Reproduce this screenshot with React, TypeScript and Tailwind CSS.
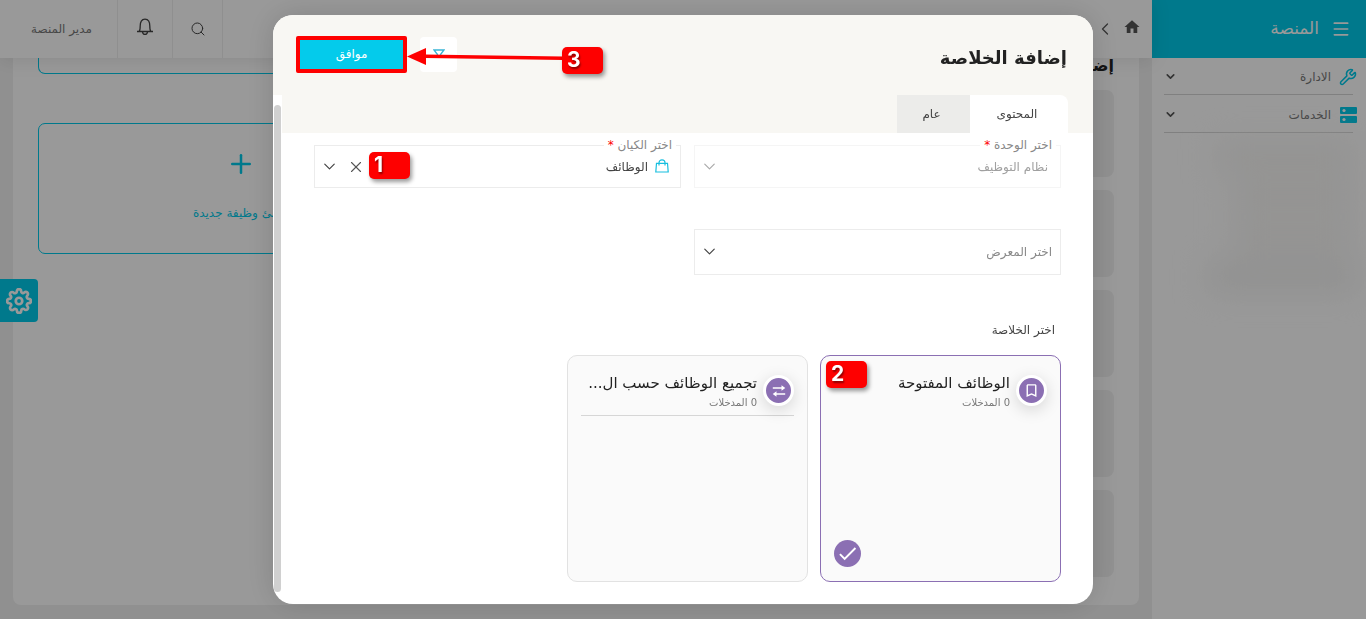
import { useState } from 'react';
import type { ReactNode } from 'react';
import { ChevronDown, ChevronLeft, Menu, Plus, Search, Wrench, X } from 'lucide-react';
import { FiSettings } from 'react-icons/fi';
import { MdBookmarkBorder, MdCheck, MdHome } from 'react-icons/md';

interface Summary {
  id: number;
  title: string;
  entries: number;
  icon: ReactNode;
  divider: boolean;
}

const ServerIcon = () => (
  <svg width="17" height="16" viewBox="0 0 17 16" fill="none">
    <rect width="17" height="7" rx="1" fill="#00cae9" />
    <rect y="9" width="17" height="7" rx="1" fill="#00cae9" />
    <circle cx="4" cy="3.5" r="1.6" fill="#fff" />
    <circle cx="4" cy="12.5" r="1.6" fill="#fff" />
  </svg>
);

const BellIcon = () => (
  <svg width="18" height="18" viewBox="0 0 18 18" fill="none" stroke="#444" strokeWidth="1.3">
    <path d="M1 13.5h16M3.2 13.3c1-1 1-2.3 1-5.3C4.2 3.8 5.5 1.2 9 1.2s4.800 2.600 4.800 6.800c0 3 0 4.300 1 5.300" />
    <path d="M6.500 13.800c.2 1.700 1.200 2.500 2.500 2.500s2.300-.8 2.500-2.500" />
  </svg>
);

const BagIcon = () => (
  <svg width="14" height="14" viewBox="0 0 14 14" fill="none" stroke="#19bfdf" strokeWidth="1.2">
    <path d="M1.500 4.300h11l.7 8.700H.8z" />
    <path d="M4 6.500V3.800C4 2 5.300.8 7 .8s3 1.200 3 3v2.700" />
  </svg>
);

const SwapIcon = () => (
  <svg width="14" height="12" viewBox="0 0 14 12" fill="#fff">
    <path d="M.8 2.200H9.500V.2L13.300 3 9.500 5.800V3.800H.8z" />
    <path d="M13.200 8.200H4.500V6.200L.7 9l3.800 2.800V9.800h8.700z" />
  </svg>
);

const FilterIcon = () => (
  <svg width="12" height="12" viewBox="0 0 12 12" fill="none" stroke="#3ab5d6" strokeWidth="1.4">
    <path d="M1 2h10L7.500 6.500v2h-3v-2z" />
  </svg>
);

const summaries: Summary[] = [
  {
    id: 1,
    title: 'الوظائف المفتوحة',
    entries: 0,
    icon: <MdBookmarkBorder size={17} className="text-white" />,
    divider: false
  },
  {
    id: 2,
    title: 'تجميع الوظائف حسب ال...',
    entries: 0,
    icon: <SwapIcon />,
    divider: true
  }
];

const menuItems = [
  { label: 'الادارة', icon: <Wrench size={18} className="text-[#00cae9]" /> },
  { label: 'الخدمات', icon: <ServerIcon /> }
];

function StepBadge({ step, className }: { step: number; className: string }) {
  return (
    <span
      dir="ltr"
      className={`absolute z-10 w-[41px] h-[27px] rounded-[5px] bg-[#fe0000] pl-[5px] text-white text-left font-bold text-[21px] leading-[26px] shadow-[2px_3px_4px_rgba(0,0,0,0.4)] font-[Inter,sans-serif] [text-shadow:1px_2px_2px_rgba(0,0,0,0.45)] ${className}`}
    >
      {step}
    </span>
  );
}

function Sidebar() {
  return (
    <aside className="w-[214px] shrink-0 bg-white">
      <div className="h-[58px] bg-[#00cae9] flex items-center pr-[15px] gap-3 text-white">
        <button type="button" aria-label="القائمة">
          <Menu size={20} strokeWidth={2} />
        </button>
        <span className="text-[17px]">المنصة</span>
      </div>
      <nav className="pl-3 pr-[9px]">
        {menuItems.map((item) => (
          <button
            key={item.label}
            type="button"
            className="w-full h-[37px] mb-px flex items-center gap-2 text-xs text-[#777]"
          >
            <span className="w-[18px] flex justify-center">{item.icon}</span>
            <span className="flex-1 self-stretch flex items-center justify-between relative">
              <span>{item.label}</span>
              <ChevronDown size={13} strokeWidth={3} className="text-[#555]" />
              <span className="absolute -right-[22px] left-0 bottom-0 h-px bg-[#d6d6d6]" />
            </span>
          </button>
        ))}
      </nav>
      <div className="mt-3 mr-2 ml-8 space-y-4 blur-lg">
        <div className="mr-1 ml-8 h-6 bg-[#f3f2f0]" />
        <div className="mr-1 ml-12 h-6 bg-[#f3f2f0]" />
        <div className="mr-1 ml-12 h-6 bg-[#f3f2f0]" />
        <div className="ml-6 h-6 bg-[#eeeeed]" />
      </div>
    </aside>
  );
}

function TopBar() {
  return (
    <header className="h-[58px] bg-white flex items-stretch shadow-[0_2px_20px_rgba(0,0,0,0.1)] relative">
      <div className="flex-1 flex items-center gap-2 pr-[11px] text-[#555]">
        <MdHome size={18} className="mb-1" />
        <ChevronLeft size={20} strokeWidth={1.5} />
      </div>
      <button type="button" aria-label="بحث" className="w-[51px] border-x border-[#eee] flex items-center justify-center text-[#444]">
        <Search size={16} strokeWidth={1.5} />
      </button>
      <button type="button" aria-label="الإشعارات" className="w-[55px] pb-1 border-l border-[#eee] flex items-center justify-center">
        <BellIcon />
      </button>
      <button type="button" className="w-[117px] pl-[6px] text-xs text-[#777]">مدير المنصة</button>
    </header>
  );
}

function Page() {
  return (
    <div className="min-h-screen flex bg-[#f1f1f1]">
      <Sidebar />
      <div className="flex-1 flex flex-col min-w-0">
        <TopBar />
        <main className="flex-1 flex justify-between bg-white rounded-b-lg mx-[13px] mb-[14px] pr-[25px] pl-[25px]">
          <div className="w-[240px]">
            <h2 className="h-8 text-base leading-4 font-bold text-[#222]">إضافة</h2>
            <div className="space-y-[13px]">
              {[1, 2, 3, 4, 5].map((n) => (
                <div key={n} className="h-[87px] rounded-lg bg-[#f1f1f1]" />
              ))}
            </div>
          </div>
          <div className="w-[406px]">
            <div className="h-4 border border-t-0 border-[#00cae9] rounded-b-[7px]" />
            <a
              href="#new-job"
              className="mt-[49px] h-[131px] border border-[#00cae9] rounded-[7px] flex flex-col items-center text-[#00cae9]"
            >
              <Plus size={30} strokeWidth={2} className="mt-[25px]" />
              <span className="mt-[26px] text-xs">انشئ وظيفة جديدة</span>
            </a>
          </div>
        </main>
      </div>
      <button
        type="button"
        aria-label="الإعدادات"
        className="absolute left-0 top-[279px] w-[38px] h-[43px] rounded-r bg-[#00cae9] text-white flex items-center justify-center"
      >
        <FiSettings size={26} strokeWidth={2.5} />
      </button>
    </div>
  );
}

interface FieldProps {
  id: string;
  label: string;
  value?: string;
  disabled?: boolean;
  icon?: ReactNode;
  children?: ReactNode;
}

function SelectField({ id, label, value, disabled, icon, children }: FieldProps) {
  return (
    <div className={`relative h-[43px] border ${disabled ? 'border-[#f5f5f5]' : 'border-[#ececec]'}`}>
      <label htmlFor={id} className="absolute -top-[9px] right-1 bg-white px-1 text-xs leading-4 text-[#888]">
        {label} <span className="text-[#fe0000]">*</span>
      </label>
      {icon && <span className="absolute right-[11px] top-[13px]">{icon}</span>}
      <select
        id={id}
        disabled={disabled}
        defaultValue={value}
        className={`w-full h-full appearance-none bg-transparent text-xs opacity-100 ${icon ? 'pr-8' : 'pr-3'} ${disabled ? 'text-[#a0a0a0]' : 'text-[#444]'}`}
      >
        <option>{value}</option>
      </select>
      <ChevronDown
        size={19}
        strokeWidth={1.5}
        className={`absolute left-[5px] top-[11px] pointer-events-none ${disabled ? 'text-[#aaa]' : 'text-[#444]'}`}
      />
      {children}
    </div>
  );
}

export default function App() {
  const [tab, setTab] = useState('content');
  const [selected, setSelected] = useState(1);

  return (
    <div dir="rtl" className="font-['DejaVu_Sans',sans-serif]">
      <Page />

      <div className="fixed inset-0 bg-black/40 flex items-start justify-center pt-[15px]">
        <div
          role="dialog"
          aria-labelledby="dialog-title"
          className="w-full max-w-[820px] rounded-[20px] overflow-hidden bg-white shadow-[0_0_30px_rgba(0,0,0,0.15)]"
        >
          {/* Encabezado */}
          <div className="h-20 pb-[2px] bg-[#f8f7f3] flex items-center justify-between pr-[26px] pl-[23px]">
            <h1 id="dialog-title" className="pt-2 text-lg font-bold text-[#222]">إضافة الخلاصة</h1>
            <div className="relative flex items-center gap-[13px]">
              <button
                type="button"
                aria-label="تصفية"
                className="w-[37px] h-[35px] rounded bg-white flex items-center justify-center"
              >
                <FilterIcon />
              </button>
              <button type="button" className="w-[111px] h-[37px] rounded-xs border-4 border-[#fe0000] bg-[#04cbeb] text-white text-xs">
                موافق
              </button>
              <svg width="156" height="20" viewBox="0 0 156 20" className="absolute left-[111px] top-[10px]">
                <path d="M18 8.500L156 10.500V14L18 12z" fill="#fe0000" />
                <path d="M0 10.500L19 2v17z" fill="#fe0000" />
              </svg>
              <StepBadge step={3} className="left-[266px] top-[11px]" />
            </div>
          </div>

          {/* Cuerpo con barra de scroll */}
          <div className="flex">
            <div className="flex-1 min-w-0">
              <div role="tablist" className="h-[38px] bg-[#f8f7f3] pr-[25px] flex text-xs text-[#444]">
                <button
                  type="button"
                  role="tab"
                  aria-selected={tab === 'content'}
                  onClick={() => setTab('content')}
                  className={`w-[98px] rounded-tr-lg pr-1 ${tab === 'content' ? 'bg-white' : 'bg-[#ececea]'}`}
                >
                  المحتوى
                </button>
                <button
                  type="button"
                  role="tab"
                  aria-selected={tab === 'general'}
                  onClick={() => setTab('general')}
                  className={`w-[73px] pr-1 ${tab === 'general' ? 'bg-white' : 'bg-[#ececea]'}`}
                >
                  عام
                </button>
              </div>

              <div className="px-8 pt-3 pb-[22px]">
                <div className="grid grid-cols-2 gap-x-[13px] gap-y-[41px]">
                  <SelectField id="module" label="اختر الوحدة" value="نظام التوظيف" disabled />
                  <SelectField id="entity" label="اختر الكيان" value="الوظائف" icon={<BagIcon />}>
                    <button type="button" aria-label="مسح" className="absolute left-8 top-3 text-[#555]">
                      <X size={18} strokeWidth={1.5} />
                    </button>
                    <StepBadge step={1} className="left-[54px] top-[6px]" />
                  </SelectField>
                  <div className="relative h-[46px] border border-[#ececec]">
                    <select
                      aria-label="اختر المعرض"
                      className="w-full h-full appearance-none bg-transparent pr-2 text-xs text-[#888]"
                    >
                      <option>اختر المعرض</option>
                    </select>
                    <ChevronDown
                      size={19}
                      strokeWidth={1.5}
                      className="absolute left-[5px] top-3 text-[#444] pointer-events-none"
                    />
                  </div>
                </div>

                <p className="mt-[47px] mr-[6px] text-xs leading-4 text-[#444]">اختر الخلاصة</p>

                <div className="mt-[17px] grid grid-cols-3 gap-3">
                  {summaries.map((summary) => (
                    <div key={summary.id} className="relative">
                      <button
                        type="button"
                        aria-pressed={selected === summary.id}
                        onClick={() => setSelected(summary.id)}
                        className={`w-full h-[227px] rounded-[10px] border bg-[#fafafa] px-[13px] pt-[15px] flex flex-col justify-start text-right ${
                          selected === summary.id ? 'border-[#8b6fb3]' : 'border-[#e2e2e2]'
                        }`}
                      >
                        <span className={`w-full h-[45px] flex gap-[6px] ${summary.divider ? 'border-b border-[#d6d6d6]' : ''}`}>
                          <span className="mt-1 w-[31px] h-[31px] shrink-0 rounded-full border-[3px] border-white bg-[#8b6fb3] shadow-[0_4px_16px_rgba(0,0,0,0.15)] flex items-center justify-center">
                            {summary.icon}
                          </span>
                          <span className="min-w-0">
                            <span className="block whitespace-nowrap text-[15px] leading-6 text-[#222]">{summary.title}</span>
                            <span className="block text-[10px] leading-4 text-[#777]">{summary.entries} المدخلات</span>
                          </span>
                        </span>
                      </button>
                      {selected === summary.id && (
                        <span className="absolute left-[14px] bottom-[15px] w-[27px] h-[27px] rounded-full bg-[#8b6fb3] text-white flex items-center justify-center">
                          <MdCheck size={23} />
                        </span>
                      )}
                      {summary.id === 1 && <StepBadge step={2} className="left-[6px] top-[6px]" />}
                    </div>
                  ))}
                </div>
              </div>
            </div>
            <div className="w-[9px] pt-[10px] pb-3 pl-px pr-px">
              <div className="h-full rounded-full bg-[#d0d0d0]" />
            </div>
          </div>
        </div>
      </div>
    </div>
  );
}
